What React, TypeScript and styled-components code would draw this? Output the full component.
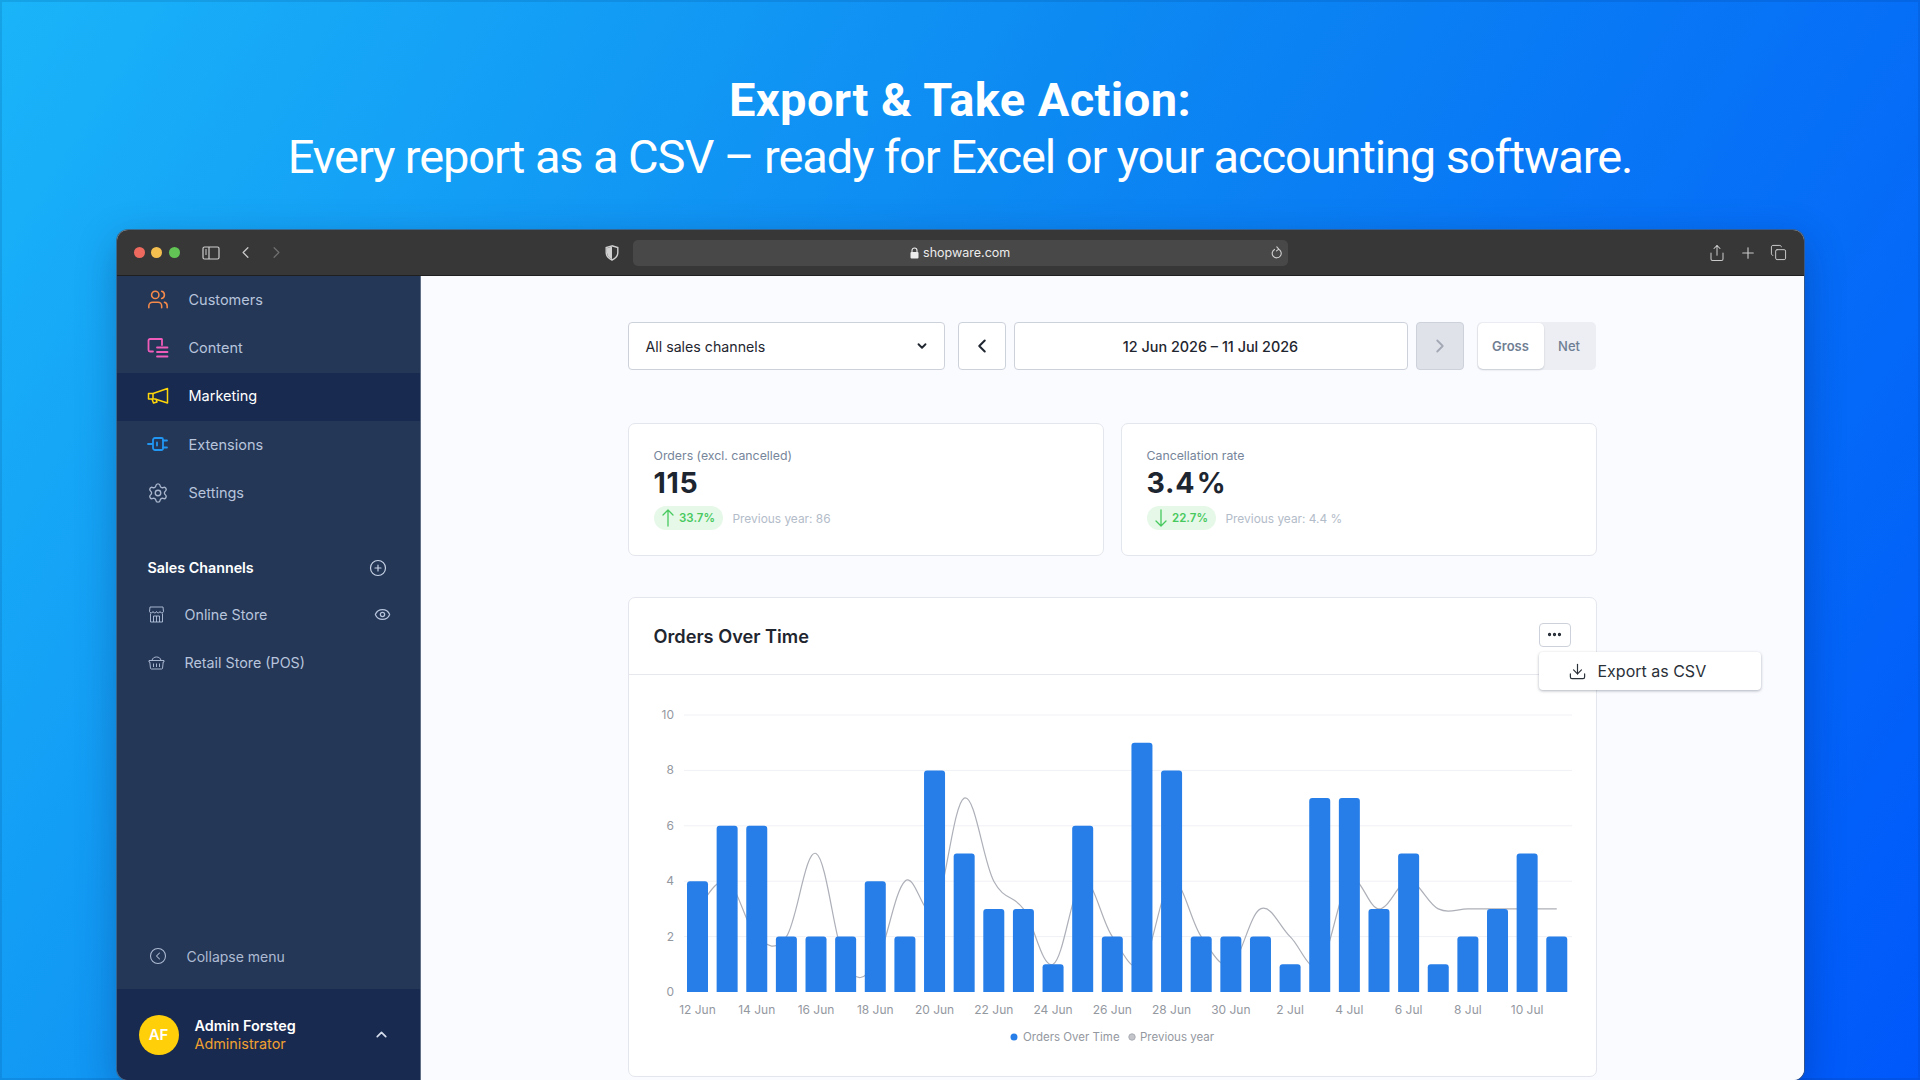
import { createGlobalStyle, styled } from "styled-components";
import {
  ChevronDown,
  ChevronLeft,
  ChevronRight,
  ChevronUp,
  CirclePlus,
  Eye,
  CircleChevronLeft,
  Settings,
  Users,
  Share,
  Plus,
  Copy,
  Download,
  Ellipsis,
} from "lucide-react";

const GlobalStyle = createGlobalStyle`
  html, body {
    margin: 0;
    padding: 0;
    height: 100%;
  }
  body {
    font-family: Inter, "Noto Sans", sans-serif;
    overflow: hidden;
  }
  * { box-sizing: border-box; }
`;

const Page = styled.div`
  width: 1920px;
  height: 1080px;
  overflow: hidden;
  display: flex;
  flex-direction: column;
  align-items: center;
  padding-top: 71px;
  background: linear-gradient(122deg, #1ab4f9 0%, #0d8af2 42%, #0058fb 100%);
  box-shadow: inset 0 0 0 2px rgba(0, 40, 100, 0.12);
`;

const Headline = styled.h1`
  margin: 0;
  height: 159px;
  flex-shrink: 0;
  color: #fff;
  text-align: center;
  font-family: Roboto, Inter, sans-serif;
  font-size: 47px;
  line-height: 57px;
  font-weight: 400;
  letter-spacing: -1.1px;
`;

const HeadStrong = styled.strong`
  display: block;
  font-weight: 700;
  letter-spacing: 0.4px;
`;

const Browser = styled.div`
  width: 1687px;
  height: 850px;
  flex-shrink: 0;
  display: flex;
  flex-direction: column;
  border-radius: 11px;
  overflow: hidden;
  background: #fafbff;
  box-shadow: 0 0 0 1px rgba(70, 85, 105, 0.7), 0 12px 40px rgba(0, 20, 80, 0.3);
`;

const TitleBar = styled.div`
  height: 46px;
  flex-shrink: 0;
  display: flex;
  align-items: center;
  padding: 0 17px;
  background: #373737;
  border-bottom: 1px solid #1f1f1f;
  color: #c9c9c9;
`;

const Dots = styled.div`
  display: flex;
  gap: 6.6px;
  margin-right: 22px;
`;

const Dot = styled.span<{ $color: string }>`
  width: 11px;
  height: 11px;
  border-radius: 50%;
  background: ${({ $color }) => $color};
`;

const NavIcons = styled.div`
  display: flex;
  align-items: center;
  gap: 12px;
  margin-right: 319px;
`;

const PanelToggle = styled.span`
  display: flex;
  margin-right: 4px;
`;

const ShieldWrap = styled.div`
  display: flex;
  margin-right: 14px;
`;

const AddressBar = styled.div`
  width: 655px;
  height: 26px;
  display: flex;
  align-items: center;
  justify-content: center;
  position: relative;
  gap: 4px;
  border-radius: 5px;
  background: #484848;
  color: #ececec;
  font-size: 12.5px;
`;

const Reload = styled.span`
  position: absolute;
  right: 5px;
  top: 6px;
  display: flex;
`;

const ToolIcons = styled.div`
  margin-left: auto;
  display: flex;
  align-items: center;
  gap: 13px;
`;

const Body = styled.div`
  flex: 1;
  display: flex;
  min-height: 0;
`;

const Sidebar = styled.aside`
  width: 304px;
  flex-shrink: 0;
  display: flex;
  flex-direction: column;
  background: #243757;
  border-right: 1px solid #5f6f86;
`;

const NavRow = styled.div<{ $active?: boolean }>`
  height: 48.4px;
  display: flex;
  align-items: center;
  gap: 20px;
  padding: 0 0 2px 30px;
  font-size: 14.5px;
  color: ${({ $active }) => ($active ? "#fff" : "#b7c4dc")};
  background: ${({ $active }) => ($active ? "#182a50" : "transparent")};
`;

const IconSlot = styled.span<{ $color: string }>`
  width: 22px;
  display: flex;
  justify-content: center;
  color: ${({ $color }) => $color};
`;

const SectionHead = styled.div`
  margin-top: 28px;
  height: 44px;
  display: flex;
  align-items: center;
  justify-content: space-between;
  padding: 0 33px 0 31px;
  color: #fff;
  font-size: 14.3px;
  font-weight: 600;
`;

const PlusIcon = styled.span`
  display: flex;
  color: #c7d2e4;
`;

const ChannelRow = styled.div`
  height: 48.4px;
  display: flex;
  align-items: center;
  padding: 0 29px 0 31px;
  font-size: 14.3px;
  color: #b7c4dc;
`;

const ChannelIcon = styled.span`
  width: 17px;
  margin-right: 20px;
  display: flex;
  justify-content: center;
`;

const ChannelEye = styled.span`
  margin-left: auto;
  display: flex;
`;

const SideSpacer = styled.div`
  flex: 1;
`;

const CollapseRow = styled.div`
  height: 48px;
  display: flex;
  align-items: center;
  gap: 20px;
  padding-left: 32px;
  margin-bottom: 9px;
  font-size: 14px;
  color: #aebbd3;
`;

const UserPanel = styled.div`
  height: 91px;
  flex-shrink: 0;
  display: flex;
  align-items: center;
  padding: 0 30px 0 22px;
  background: #182a50;
`;

const Avatar = styled.div`
  width: 40px;
  height: 40px;
  border-radius: 50%;
  display: flex;
  align-items: center;
  justify-content: center;
  margin-right: 16px;
  background: #ffcf0a;
  color: #fff;
  font-size: 15px;
  font-weight: 600;
`;

const UserText = styled.div`
  display: flex;
  flex-direction: column;
  font-size: 14.4px;
  line-height: 18px;
`;

const UserName = styled.span`
  color: #fff;
  font-weight: 600;
`;

const UserRole = styled.span`
  color: #f0a030;
`;

const UserChevron = styled.span`
  margin-left: auto;
  display: flex;
  color: #d5dceb;
`;

const Main = styled.main`
  flex: 1;
  min-width: 0;
  padding: 46px 207px 0 207px;
  position: relative;
  background: #fafbff;
`;

const Toolbar = styled.div`
  display: flex;
  height: 48px;
`;

const Control = styled.div`
  height: 48px;
  display: flex;
  align-items: center;
  background: #fff;
  border: 1px solid #cdd1da;
  border-radius: 4px;
  color: #1f2630;
  font-size: 14.2px;
`;

const SelectBox = styled(Control)`
  width: 317px;
  padding: 0 15px 0 17px;
  justify-content: space-between;
  margin-right: 13px;
`;

const SquareButton = styled(Control)<{ $disabled?: boolean }>`
  width: 48px;
  justify-content: center;
  background: ${({ $disabled }) => ($disabled ? "#e0e2ea" : "#fff")};
  color: ${({ $disabled }) => ($disabled ? "#a3a8b5" : "#1f2630")};
`;

const DateBox = styled(Control)`
  width: 394px;
  margin: 0 8px;
  justify-content: center;
  font-size: 14.4px;
  font-weight: 500;
`;

const Toggle = styled.div`
  width: 119px;
  margin-left: 13px;
  display: flex;
  padding: 1px;
  background: #eceef3;
  border-radius: 5px;
  font-size: 13px;
  font-weight: 500;
  color: #6f7e93;
`;

const ToggleTab = styled.div<{ $active?: boolean }>`
  display: flex;
  align-items: center;
  justify-content: center;
  flex: ${({ $active }) => ($active ? "0 0 66px" : "1")};
  background: ${({ $active }) => ($active ? "#fff" : "transparent")};
  font-weight: ${({ $active }) => ($active ? 600 : 500)};
  border-radius: 5px;
  box-shadow: ${({ $active }) =>
    $active ? "0 1px 2px rgba(30,40,60,0.18)" : "none"};
`;

const CardRow = styled.div`
  display: grid;
  grid-template-columns: 1fr 1fr;
  gap: 17px;
  margin-top: 53px;
`;

const StatCard = styled.div`
  height: 133px;
  padding: 24px 25px 0;
  background: #fff;
  border: 1px solid #e3e6ed;
  border-radius: 7px;
`;

const StatLabel = styled.div`
  font-size: 12.3px;
  line-height: 16px;
  color: #76859a;
`;

const StatValue = styled.div`
  margin-top: 2px;
  font-size: 28.5px;
  line-height: 34px;
  font-weight: 700;
  letter-spacing: 0.7px;
  word-spacing: -6px;
  color: #1d2530;
`;

const StatFoot = styled.div`
  margin-top: 6px;
  display: flex;
  align-items: center;
  gap: 10px;
  font-size: 11.9px;
  color: #b3bcc9;
`;

const Trend = styled.span`
  height: 24px;
  width: 69px;
  display: flex;
  align-items: center;
  justify-content: center;
  gap: 4px;
  border-radius: 12px;
  background: #e6f8e8;
  color: #47c95e;
  font-size: 11.5px;
  font-weight: 600;
`;

const ChartCard = styled.section`
  margin-top: 40.5px;
  height: 480px;
  background: #fff;
  border: 1px solid #e3e6ed;
  border-radius: 7px;
`;

const ChartHead = styled.div`
  height: 77px;
  display: flex;
  align-items: center;
  justify-content: space-between;
  padding: 0 25px 0 25px;
  border-bottom: 1px solid #e6e8ee;
`;

const ChartTitle = styled.h2`
  margin: 0;
  font-size: 18.2px;
  font-weight: 600;
  color: #1f2630;
`;

const MoreButton = styled.div`
  width: 32px;
  height: 24px;
  margin-top: -2px;
  display: flex;
  align-items: center;
  justify-content: center;
  border: 1px solid #cdd1da;
  border-radius: 4px;
  color: #1f2630;
`;

const ExportMenu = styled.div`
  position: absolute;
  left: 1118px;
  top: 376px;
  width: 222px;
  height: 38px;
  display: flex;
  align-items: center;
  gap: 11px;
  padding-left: 29px;
  background: #fff;
  border-radius: 4px;
  box-shadow: 0 1px 3px rgba(30, 40, 60, 0.35);
  color: #2a3038;
  font-size: 16px;
`;

const ChartSvg = styled.svg`
  display: block;
  font-family: Inter, sans-serif;
`;

const LeftPad = 55;
const barVals = [4, 6, 6, 2, 2, 2, 4, 2, 8, 5, 3, 3, 1, 6, 2, 9, 8, 2, 2, 2, 1, 7, 7, 3, 5, 1, 2, 3, 5, 2];
const prevVals = [3, 4, 2, 2, 5, 1, 1, 4, 3, 7, 4, 3, 1, 4, 2, 1, 4, 2, 1, 3, 2, 1, 4, 3, 4, 3, 3, 3, 3, 3];
const labels = ["12 Jun", "14 Jun", "16 Jun", "18 Jun", "20 Jun", "22 Jun", "24 Jun", "26 Jun", "28 Jun", "30 Jun", "2 Jul", "4 Jul", "6 Jul", "8 Jul", "10 Jul"];
const baseY = 317;
const unit = 27.7;
const step = 29.63;
const barW = 21;
const barX = (i: number) => LeftPad + 3 + i * step;
const lineX = (i: number) => barX(i) + barW / 2;
const valY = (v: number) => baseY - v * unit;

// bar with rounded top corners only
const barPath = (i: number, v: number) => {
  const x = barX(i);
  const y = valY(v);
  const r = 3;
  return `M${x} ${baseY}V${y + r}Q${x} ${y} ${x + r} ${y}H${x + barW - r}Q${x + barW} ${y} ${x + barW} ${y + r}V${baseY}Z`;
};

// smooth line through the previous year's points
const smoothLine = (vals: number[]) => {
  const pts = vals.map((v, i) => [lineX(i), valY(v)]);
  let d = `M${pts[0][0]} ${pts[0][1]}`;
  for (let i = 0; i < pts.length - 1; i++) {
    const p0 = pts[Math.max(i - 1, 0)];
    const p1 = pts[i];
    const p2 = pts[i + 1];
    const p3 = pts[Math.min(i + 2, pts.length - 1)];
    const k = 5.5;
    d += `C${p1[0] + (p2[0] - p0[0]) / k} ${p1[1] + (p2[1] - p0[1]) / k} ${p2[0] - (p3[0] - p1[0]) / k} ${p2[1] - (p3[1] - p1[1]) / k} ${p2[0]} ${p2[1]}`;
  }
  return d;
};

const OrdersChart = () => (
  <ChartSvg width={950} height={400} viewBox="0 0 950 400">
    {[0, 2, 4, 6, 8, 10].map((v) => (
      <g key={v}>
        {v > 0 && <line x1={LeftPad} x2={943} y1={valY(v)} y2={valY(v)} stroke="#f0f1f5" />}
        <text x={45} y={valY(v) + 4} textAnchor="end" fontSize="12" fill="#94989f">{v}</text>
      </g>
    ))}
    <path d={smoothLine(prevVals)} fill="none" stroke="#adb0b8" strokeWidth="1.2" />
    {barVals.map((v, i) => (
      <path key={i} d={barPath(i, v)} fill="#277ee8" />
    ))}
    {labels.map((l, i) => (
      <text key={l} x={lineX(i * 2)} y={baseY + 22} textAnchor="middle" fontSize="12" fill="#94989f">{l}</text>
    ))}
    <circle cx={385} cy={362} r={3.5} fill="#277ee8" />
    <text x={394} y={366} fontSize="11.5" fill="#94989f">Orders Over Time</text>
    <circle cx={503} cy={362} r={3.2} fill="#c3c5cb" stroke="#a9acb4" />
    <text x={511} y={366} fontSize="11.5" fill="#94989f">Previous year</text>
  </ChartSvg>
);

const SidebarToggleIcon = () => (
  <svg width="18" height="14" viewBox="0 0 18 14" fill="none" stroke="#cfcfcf" strokeWidth="1.2">
    <rect x="1" y="1" width="16" height="12" rx="1.5" />
    <path d="M7 1v12M3 4h2M3 6h2M3 8h2" />
  </svg>
);

const ShieldIcon = () => (
  <svg width="14" height="16" viewBox="0 0 14 16">
    <path d="M7 .8 1.2 2.6v5c0 3.6 2.6 6 5.8 7.4 3.2-1.4 5.8-3.8 5.8-7.4v-5Z" fill="none" stroke="#d0d0d0" strokeWidth="1.4" />
    <path d="M7 1.5v12.8c-2.8-1.3-5-3.4-5-6.7V3.2Z" fill="#d0d0d0" />
  </svg>
);

const PadlockIcon = () => (
  <svg width="9" height="12" viewBox="0 0 9 12">
    <path d="M2 5.5v-2a2.5 2.5 0 0 1 5 0v2" fill="none" stroke="#ececec" strokeWidth="1.1" />
    <rect x="0.5" y="5" width="8" height="6.5" rx="1" fill="#ececec" />
  </svg>
);

const ReloadIcon = () => (
  <svg width="12" height="14" viewBox="0 0 12 14" fill="none" stroke="#cfcfcf" strokeWidth="1.1" strokeLinecap="round">
    <path d="M7.5 3.2A4.5 4.5 0 1 1 3.5 3.4" />
    <path d="M5.8 0.8 7.8 3.1 5.5 4.9" />
  </svg>
);

const ContentIcon = () => (
  <svg width="22" height="22" viewBox="0 0 22 22" fill="none" stroke="currentColor" strokeWidth="1.8" strokeLinecap="round">
    <path d="M14.5 2H3a1.5 1.5 0 0 0-1.5 1.5V13A1.5 1.5 0 0 0 3 14.5h3" />
    <path d="M15 2.5V8M10 10.5h10.5M10 15h10.5M10 19.5h10.5" />
  </svg>
);

const MegaphoneIcon = () => (
  <svg width="22" height="18" viewBox="0 0 22 18" fill="none" stroke="currentColor" strokeWidth="1.5" strokeLinejoin="round">
    <path d="M20.5 1.5V16L8 12H1.5V6.5H6Z" />
    <path d="M6 6.5V12M5 12l1.5 4 3.5-1-1-3" />
  </svg>
);

const PlugIcon = () => (
  <svg width="22" height="16" viewBox="0 0 22 16" fill="none" stroke="currentColor" strokeWidth="1.8" strokeLinecap="round">
    <path d="M1 8h4M8 2h6.5A1.5 1.5 0 0 1 16 3.5v9a1.5 1.5 0 0 1-1.5 1.5H8a2 2 0 0 1-2-2V4a2 2 0 0 1 2-2Z" />
    <path d="M16 4.5h4M16 11.5h4M10 6.5v3" />
  </svg>
);

const StoreIcon = () => (
  <svg width="17" height="17" viewBox="0 0 17 17" fill="none" stroke="currentColor" strokeWidth="0.9">
    <path d="M2.5 7.5V16h12V7.5M2 1h13l.5 4.5a1.8 1.8 0 0 1-3.5 0 1.8 1.8 0 0 1-3.5 0 1.8 1.8 0 0 1-3.5 0 1.8 1.8 0 0 1-3.5 0Z" />
    <path d="M5.5 16v-6h6v6M8.500 10v6" />
  </svg>
);

const BasketIcon = () => (
  <svg width="17" height="15" viewBox="0 0 17 15" fill="none" stroke="currentColor" strokeWidth="0.9">
    <path d="M4 5.5C4.5 .8 12.5 .8 13 5.5" />
    <path d="M1 5.5h15V7h-.8l-.7 6.5a1 1 0 0 1-1 .5h-10a1 1 0 0 1-1-.5L1.800 7H1ZM5.500 8.500V12M8.500 8.500V12M11.500 8.500V12" strokeLinejoin="round" />
  </svg>
);

const UpArrowIcon = () => (
  <svg width="14" height="20" viewBox="0 0 14 20" fill="none" stroke="currentColor" strokeWidth="1.3" strokeLinecap="round" strokeLinejoin="round">
    <path d="M7 18V2M2 7l5-5 5 5" />
  </svg>
);

const DownArrowIcon = () => (
  <svg width="14" height="20" viewBox="0 0 14 20" fill="none" stroke="currentColor" strokeWidth="1.3" strokeLinecap="round" strokeLinejoin="round">
    <path d="M7 2v16M2 13l5 5 5-5" />
  </svg>
);

export default function App() {
  return (
    <Page>
      <GlobalStyle />
      <Headline>
        <HeadStrong>Export &amp; Take Action:</HeadStrong>
        Every report as a CSV – ready for Excel or your accounting software.
      </Headline>
      <Browser>
        <TitleBar>
          <Dots>
            <Dot $color="#ee6a5f" />
            <Dot $color="#f5bf4f" />
            <Dot $color="#61c454" />
          </Dots>
          <NavIcons>
            <PanelToggle><SidebarToggleIcon /></PanelToggle>
            <ChevronLeft size={19} strokeWidth={1.6} />
            <ChevronRight size={19} strokeWidth={1.6} color="#6f6f6f" />
          </NavIcons>
          <ShieldWrap><ShieldIcon /></ShieldWrap>
          <AddressBar>
            <PadlockIcon />
            shopware.com
            <Reload><ReloadIcon /></Reload>
          </AddressBar>
          <ToolIcons>
            <Share size={18} strokeWidth={1.4} />
            <Plus size={18} strokeWidth={1.5} />
            <Copy size={17} strokeWidth={1.4} />
          </ToolIcons>
        </TitleBar>
        <Body>
          <Sidebar>
            <NavRow><IconSlot $color="#f58a4a"><Users size={23} strokeWidth={1.7} /></IconSlot>Customers</NavRow>
            <NavRow><IconSlot $color="#f05cba"><ContentIcon /></IconSlot>Content</NavRow>
            <NavRow $active><IconSlot $color="#ffd60a"><MegaphoneIcon /></IconSlot>Marketing</NavRow>
            <NavRow><IconSlot $color="#2196f3"><PlugIcon /></IconSlot>Extensions</NavRow>
            <NavRow><IconSlot $color="#a9b6cd"><Settings size={22} strokeWidth={1.5} /></IconSlot>Settings</NavRow>
            <SectionHead>
              Sales Channels
              <PlusIcon><CirclePlus size={18} strokeWidth={1.6} /></PlusIcon>
            </SectionHead>
            <ChannelRow>
              <ChannelIcon><StoreIcon /></ChannelIcon>
              Online Store
              <ChannelEye><Eye size={17} strokeWidth={1.8} /></ChannelEye>
            </ChannelRow>
            <ChannelRow>
              <ChannelIcon><BasketIcon /></ChannelIcon>
              Retail Store (POS)
            </ChannelRow>
            <SideSpacer />
            <CollapseRow>
              <CircleChevronLeft size={18} strokeWidth={1.4} />
              Collapse menu
            </CollapseRow>
            <UserPanel>
              <Avatar>AF</Avatar>
              <UserText>
                <UserName>Admin Forsteg</UserName>
                <UserRole>Administrator</UserRole>
              </UserText>
              <UserChevron><ChevronUp size={17} strokeWidth={2.4} /></UserChevron>
            </UserPanel>
          </Sidebar>
          <Main>
            <Toolbar>
              <SelectBox>
                All sales channels
                <ChevronDown size={14} strokeWidth={3.2} />
              </SelectBox>
              <SquareButton><ChevronLeft size={22} strokeWidth={2.2} /></SquareButton>
              <DateBox>12 Jun 2026 – 11 Jul 2026</DateBox>
              <SquareButton $disabled><ChevronRight size={22} strokeWidth={2} /></SquareButton>
              <Toggle>
                <ToggleTab $active>Gross</ToggleTab>
                <ToggleTab>Net</ToggleTab>
              </Toggle>
            </Toolbar>
            <CardRow>
              <StatCard>
                <StatLabel>Orders (excl. cancelled)</StatLabel>
                <StatValue>115</StatValue>
                <StatFoot>
                  <Trend><UpArrowIcon />33.7%</Trend>
                  Previous year: 86
                </StatFoot>
              </StatCard>
              <StatCard>
                <StatLabel>Cancellation rate</StatLabel>
                <StatValue>3.4 %</StatValue>
                <StatFoot>
                  <Trend><DownArrowIcon />22.7%</Trend>
                  Previous year: 4.4 %
                </StatFoot>
              </StatCard>
            </CardRow>
            <ChartCard>
              <ChartHead>
                <ChartTitle>Orders Over Time</ChartTitle>
                <MoreButton><Ellipsis size={17} strokeWidth={2.6} /></MoreButton>
              </ChartHead>
              <OrdersChart />
            </ChartCard>
            <ExportMenu>
              <Download size={19} strokeWidth={1.5} />
              Export as CSV
            </ExportMenu>
          </Main>
        </Body>
      </Browser>
    </Page>
  );
}
